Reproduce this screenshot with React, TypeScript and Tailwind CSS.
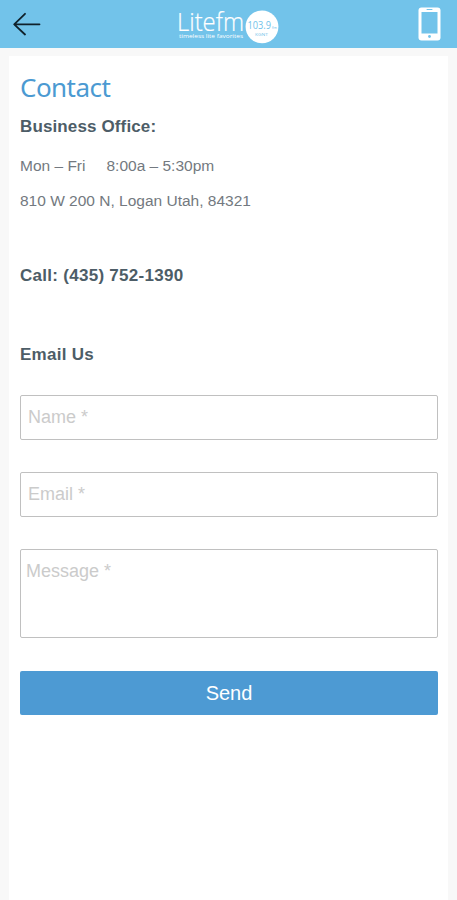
function BackArrow() {
  return (
    <svg width="28" height="24" viewBox="0 0 28 24" fill="none" stroke="#10212b" strokeWidth="1.8" strokeLinecap="round" strokeLinejoin="round">
      <path d="M26.5 12.3H1.2M12 1.8L1.2 12.3l10.8 10.2" />
    </svg>
  )
}

function Logo() {
  return (
    <svg className="overflow-visible" width="104" height="48" viewBox="0 0 104 48" fontFamily="'Open Sans', sans-serif">
      <text x="0" y="31" fontSize="25.5" fontWeight="300" fill="#fff" stroke="#fff" strokeWidth="0.2" textLength="67" lengthAdjust="spacingAndGlyphs">Litefm</text>
      <text x="2" y="38.3" fontSize="6" fill="#fff" textLength="64" lengthAdjust="spacingAndGlyphs">timeless lite favorites</text>
      <circle cx="85" cy="26.8" r="16.4" fill="#fff" />
      <text x="70.5" y="29" fontSize="10.5" fill="#72c3ea" textLength="23.5" lengthAdjust="spacingAndGlyphs">103.9</text>
      <text x="95" y="29" fontSize="4" fill="#72c3ea" textLength="5" lengthAdjust="spacingAndGlyphs">fm</text>
      <text x="78" y="35.8" fontSize="3.5" fill="#72c3ea" textLength="13" lengthAdjust="spacingAndGlyphs">KGNT</text>
    </svg>
  )
}

function PhoneIcon() {
  return (
    <svg width="23" height="34" viewBox="0 0 23 34">
      <rect x="0.5" y="0.5" width="22" height="33" rx="3" fill="#fff" />
      <rect x="3.5" y="5" width="16" height="21.5" fill="#72c3ea" />
      <rect x="8.5" y="2" width="6" height="1" rx="0.5" fill="#72c3ea" />
      <circle cx="11.5" cy="29.5" r="1.4" fill="#72c3ea" />
    </svg>
  )
}

const FIELD = 'block w-full rounded-[2px] border-[1.5px] border-[#c0c0c0] bg-white outline-none placeholder:text-[#cbcbcb]'

export default function App() {
  return (
    <div className="flex h-[900px] w-full flex-col overflow-hidden bg-[#f8f8f8] font-['Liberation_Sans',sans-serif]">
      {/* Top bar */}
      <header className="grid h-12 shrink-0 grid-cols-[1fr_104px_1fr] items-center bg-[#72c3ea] px-[13px]">
        <BackArrow />
        <Logo />
        <div className="flex justify-end pr-[3px]">
          <PhoneIcon />
        </div>
      </header>

      <main className="mx-[9px] mt-2 flex-1 bg-white pr-[10px] pl-[11px] text-[#4d5d67]">
        <h1 className="pt-[13px] font-['Noto_Sans',sans-serif] text-[26px] leading-9 tracking-[-0.55px] text-[#4b9ad2]">Contact</h1>

        {/* Office details */}
        <h2 className="mt-[10px] text-[17px] leading-6 font-bold tracking-[0.13px]">Business Office:</h2>
        <p className="mt-[15px] flex gap-[21px] text-[15.5px] leading-6 text-[#737980]">
          <span>Mon – Fri</span>
          <span>8:00a – 5:30pm</span>
        </p>
        <p className="mt-[11px] text-[15.5px] leading-6 text-[#737980]">810 W 200 N, Logan Utah, 84321</p>
        <h2 className="mt-[51px] text-[17px] leading-6 font-bold tracking-[0.28px]">Call: (435) 752-1390</h2>

        <h2 className="mt-[55px] text-[17px] leading-6 font-bold tracking-[0.28px]">Email Us</h2>
        <form className="mt-[28px]">
          <input className={`${FIELD} h-[45px] px-[7px] text-[18px]`} placeholder="Name *" />
          <input className={`${FIELD} mt-8 h-[45px] px-[7px] text-[18px]`} placeholder="Email *" />
          <textarea className={`${FIELD} mt-8 h-[89px] resize-none px-[5px] py-[9px] text-[18px] leading-6`} placeholder="Message *" />
          <button type="button" className="mt-[33px] block h-11 w-full rounded-[2px] bg-[#4d9ad3] text-[20px] leading-[44px] text-white">
            Send
          </button>
        </form>
      </main>
    </div>
  )
}
